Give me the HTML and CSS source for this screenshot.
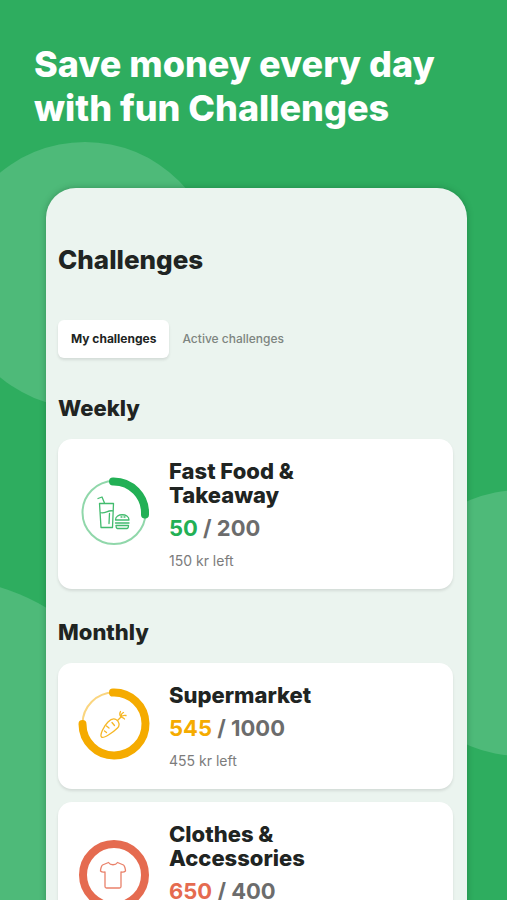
FILE: index.html
```html
<!DOCTYPE html>
<html lang="en">
<head>
<meta charset="utf-8">
<meta name="viewport" content="width=device-width, initial-scale=1">
<title>Challenges</title>
<link rel="stylesheet" href="styles.css">
</head>
<body>
<div class="page">
  <div class="bubble bubble-top"></div>
  <div class="bubble bubble-right"></div>
  <div class="bubble bubble-bottom"></div>

  <header class="promo">
    <h1 class="promo-title">Save money every day<br>with fun Challenges</h1>
  </header>

  <main class="panel">
    <h2 class="panel-title">Challenges</h2>
    <nav class="tabs">
      <button class="tab tab-active" type="button">My challenges</button>
      <button class="tab" type="button">Active challenges</button>
    </nav>

    <section class="group">
      <h3 class="group-title">Weekly</h3>
      <article class="card card-tall green">
        <svg class="ring" viewBox="0 0 72 72" aria-hidden="true">
          <circle class="track" cx="36" cy="36.500" r="31.500"/>
          <path class="progress" d="M35 5.500A31.500 31.500 0 0 1 67 38.500"/>
          <g class="icon">
            <path d="M20 22.500l4-1.500 2.500 6M21.500 27.500h14l-1 24h-11.500zM22 36.500c5 2 8-3 13-1.500M31.500 37.500l-.5 10"/>
            <path d="M37.500 44c0-7 13.500-7 13.500 0zM37.500 47h13.500M38 49.500h12.500c0 3-1 3-3 3h-6.500c-2 0-3 0-3-3zM43 41h1M46 41h1"/>
          </g>
        </svg>
        <div class="details">
          <h4 class="card-title">Fast Food &amp; Takeaway</h4>
          <p class="amount"><span class="spent">50</span> / 200</p>
          <p class="left">150 kr left</p>
        </div>
      </article>
    </section>

    <section class="group">
      <h3 class="group-title">Monthly</h3>
      <article class="card yellow">
        <svg class="ring" viewBox="0 0 72 72" aria-hidden="true">
          <circle class="track" cx="36" cy="36" r="31.500"/>
          <path class="progress" d="M35 4.500A31.500 31.500 0 1 1 4.500 36"/>
          <g class="icon">
            <path d="M23.500 49C21.500 47 25.500 38.500 30 34C32.500 31.500 35.500 30 38 31.500C41.500 33.500 42 37.500 39.500 40C35.500 44 25.500 51 23.500 49z"/>
            <path d="M39.500 32.500l3.500-3.500M43 29c-1.500-2-1.500-4-.5-5.500M43 29c0-2.500 1-4 2.500-4.500M43 29c1.500-1.500 3-2 5-1.500M43 29c1.500.5 3 1 3.500 2M34 34.500l2.500 3M28.500 38l2.500 2M26.500 43l2 1.500"/>
          </g>
        </svg>
        <div class="details">
          <h4 class="card-title">Supermarket</h4>
          <p class="amount"><span class="spent">545</span> / 1000</p>
          <p class="left">455 kr left</p>
        </div>
      </article>
      <article class="card card-tall red">
        <svg class="ring" viewBox="0 0 72 72" aria-hidden="true">
          <circle class="progress" cx="36" cy="36" r="31"/>
          <g class="icon">
            <path d="M30.500 23.500c2 3 7 3 9 0l6 2.500c1 .5 2 4 2 6-1 1-2.500 1.500-4.500 1v14.500c0 1-.5 1.500-1.500 1.500h-13c-1 0-1.500-.5-1.500-1.500v-14.500c-2 .5-3.500 0-4.500-1 0-2 1-5.500 2-6z"/>
          </g>
        </svg>
        <div class="details">
          <h4 class="card-title">Clothes &amp; Accessories</h4>
          <p class="amount"><span class="spent">650</span> / 400</p>
        </div>
      </article>
    </section>
  </main>
</div>
</body>
</html>
```
FILE: styles.css
```css
* {
  box-sizing: border-box;
}

body,
h1, h2, h3, h4, p {
  margin: 0;
}

h1, h2, h3, h4 {
  font-weight: 800;
}

body {
  font-family: Inter, "Open Sans", sans-serif;
  color: #202422;
}

.page {
  position: relative;
  height: 100vh;
  overflow: hidden;
  padding: 42px 40px 0 46px;
  background: #2ead5f;
}

.bubble {
  position: absolute;
  width: 266px;
  height: 266px;
  border-radius: 50%;
  background: #4eba79;
}

.bubble-top {
  left: -48px;
  top: 142px;
}

.bubble-right {
  right: -147px;
  top: 490px;
}

.bubble-bottom {
  left: -257px;
  top: 579px;
  width: 400px;
  height: 400px;
}

.promo {
  position: relative;
  margin-left: -12px;
}

.promo-title {
  color: #fff;
  font-size: 36px;
  line-height: 44px;
}

.panel {
  position: relative;
  min-height: 100vh;
  margin-top: 58px;
  padding: 54px 14px 24px 12px;
  border-radius: 30px 30px 0 0;
  background: #ebf4ef;
  box-shadow: 0 0 6px rgba(20, 80, 45, 0.4);
}

.panel-title {
  font-size: 26px;
  line-height: 36px;
}

.tabs {
  display: flex;
  margin-top: 42px;
}

.tab {
  padding: 0 13px;
  border: 0;
  border-radius: 6px;
  background: none;
  color: #7d8480;
  font: 500 12px/38px Inter, "Open Sans", sans-serif;
}

.tab-active {
  background: #fff;
  color: #202422;
  font-weight: 700;
  box-shadow: 0 2px 3px rgba(0, 0, 0, 0.1);
}

.group {
  margin-top: 28px;
}

.tabs + .group {
  margin-top: 35px;
}

.group-title {
  margin-bottom: 16px;
  font-size: 22px;
  line-height: 30px;
}

.card {
  display: flex;
  align-items: center;
  gap: 19px;
  padding: 20px 20px 18px;
  border-radius: 14px;
  background: #fff;
  box-shadow: 0 2px 3px rgba(0, 0, 0, 0.1);
}

.card-tall {
  min-height: 150px;
}

.card + .card {
  margin-top: 13px;
}

.ring {
  flex: none;
  width: 72px;
  height: 72px;
  margin-bottom: 6px;
  fill: none;
  stroke: currentColor;
  stroke-linecap: round;
  stroke-linejoin: round;
}

.track {
  stroke-width: 2;
  opacity: 0.5;
}

.progress {
  stroke-width: 8;
}

.icon {
  stroke-width: 1.3;
  opacity: 0.85;
}

.green { color: #22b055; }
.yellow { color: #f5ab00; }
.red { color: #e56b50; }

.details {
  align-self: flex-start;
  max-width: 160px;
}

.card-title {
  color: #202422;
  font-size: 22px;
  line-height: 24px;
}

.amount {
  margin-top: 6px;
  color: #6c6c6c;
  font-size: 22px;
  line-height: 30px;
  font-weight: 700;
}

.spent {
  color: #22b055;
}

.yellow .spent { color: #f5ab00; }
.red .spent { color: #e56b50; }

.left {
  margin-top: 8px;
  color: #7c7c7c;
  font-size: 14px;
  line-height: 20px;
}
```
